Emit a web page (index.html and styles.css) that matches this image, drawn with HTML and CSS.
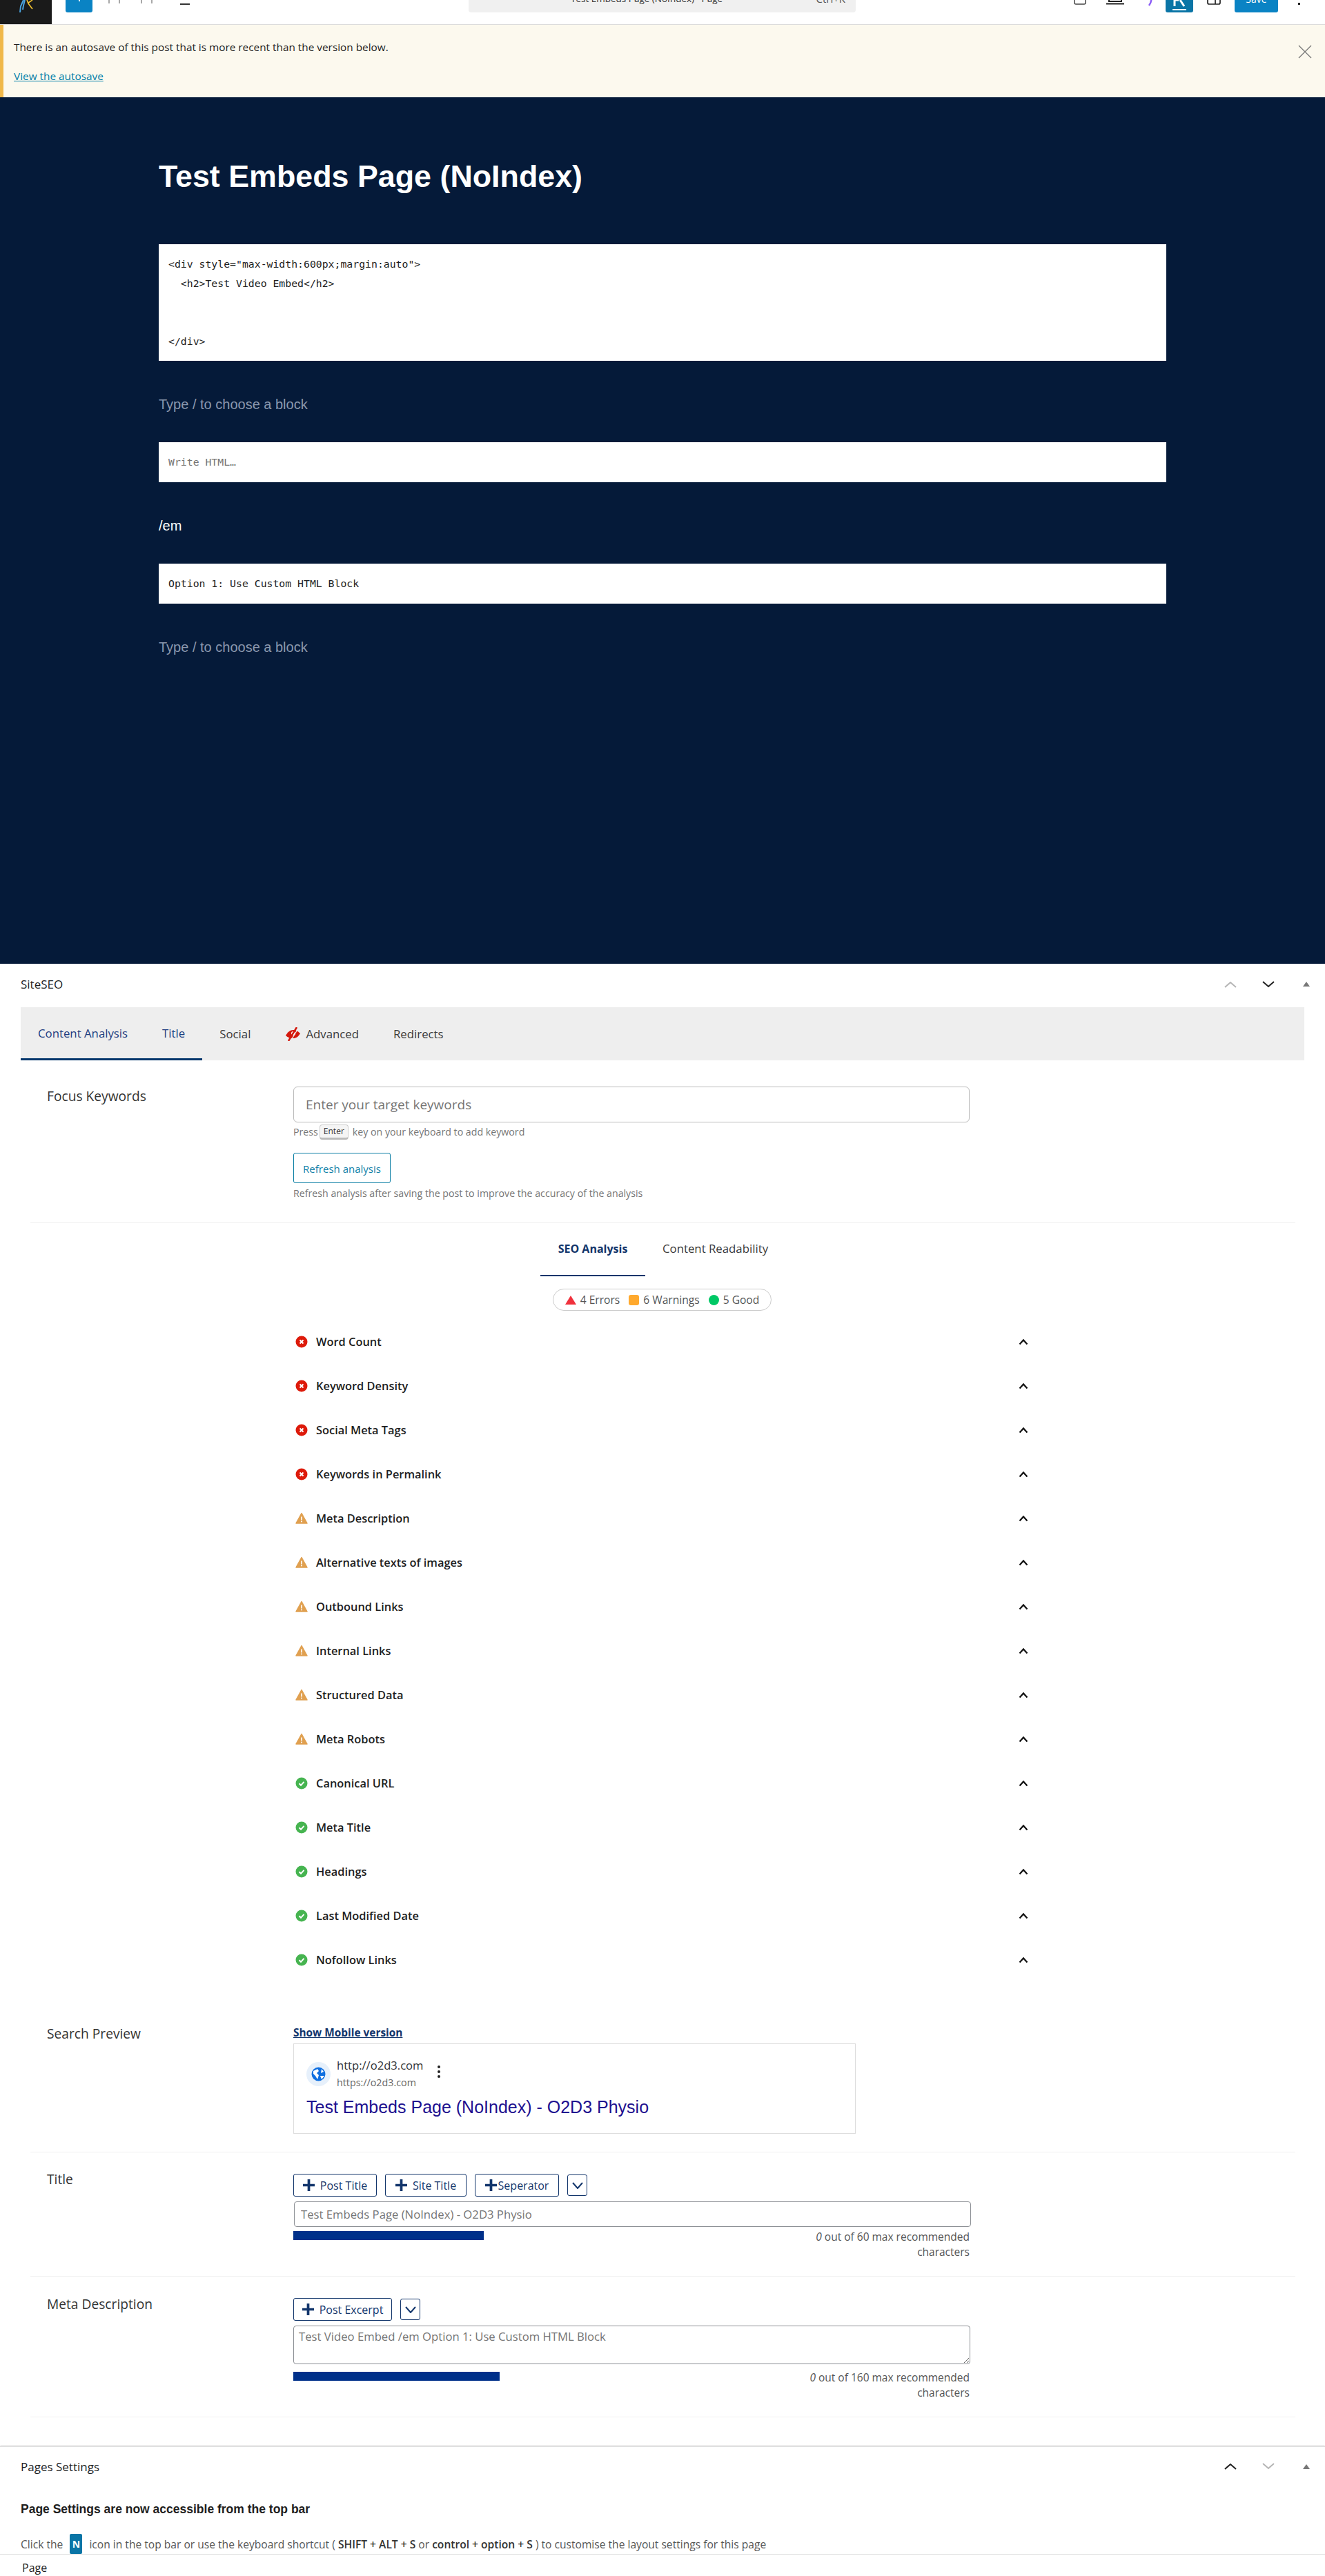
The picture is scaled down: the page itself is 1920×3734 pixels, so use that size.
FILE: index.html
```html
<!DOCTYPE html>
<html lang="en">
<head>
<meta charset="utf-8">
<title>Edit Page</title>
<link rel="stylesheet" href="styles.css">
</head>
<body>
<header class="topbar">
  <div class="logo"><svg width="24" height="18" viewBox="0 0 24 18"><path d="M8 0 4 9l-1 9M10 0 8 8l-1 6" stroke="#4aa3df" stroke-width="2" fill="none"/><path d="M13 0l2 5 6 8M21 0l-6 4" stroke="#f2c230" stroke-width="1.600" fill="none"/></svg></div>
  <div class="add-btn"><span class="add-plus"></span></div>
  <span class="tick tick-a"></span><span class="tick tick-b"></span><span class="tick tick-c"></span><span class="tick tick-d"></span>
  <span class="dash"></span>
  <div class="search"><span class="search-title">Test Embeds Page (NoIndex) · Page</span><span class="search-key">Ctrl+K</span></div>
  <svg class="top-icon ti-doc" width="18" height="20" viewBox="0 0 18 20"><path d="M1 0v17a2 2 0 0 0 2 2h12a2 2 0 0 0 2-2V0" fill="none" stroke="#444" stroke-width="1.500"/></svg>
  <svg class="top-icon ti-lap" width="26" height="20" viewBox="0 0 26 20"><path d="M4 0v15h18V0" fill="none" stroke="#222" stroke-width="2"/><path d="M0 18.500h26" stroke="#222" stroke-width="2"/></svg>
  <svg class="top-icon ti-swirl" width="14" height="28" viewBox="0 0 14 28"><path d="M10 0c4 8 2 12-2 16" fill="none" stroke="#3c8fe0" stroke-width="3"/><path d="M8 14c1 5 0 8-3 12" fill="none" stroke="#8b5cf6" stroke-width="2.500"/></svg>
  <div class="n-btn"><svg width="22" height="18" viewBox="0 0 22 18"><path d="M4 0v9M18 9 12 0M4 0h6" stroke="#fff" stroke-width="3" fill="none"/><path d="M1 14h20" stroke="#fff" stroke-width="2"/></svg></div>
  <svg class="top-icon ti-side" width="20" height="20" viewBox="0 0 20 20"><path d="M1 0v17a2 2 0 0 0 2 2h14a2 2 0 0 0 2-2V0M12 0v19" fill="none" stroke="#222" stroke-width="1.700"/></svg>
  <div class="save-btn">Save</div>
  <span class="top-dot"></span>
</header>

<section class="notice">
  <div class="notice-body">
    <p class="notice-text">There is an autosave of this post that is more recent than the version below.</p>
    <a class="notice-link" href="#">View the autosave</a>
  </div>
  <svg class="notice-close" width="20" height="20" viewBox="0 0 20 20"><path d="M1 1l18 18M19 1 1 19" stroke="#777" stroke-width="1.300"/></svg>
</section>

<main class="canvas">
  <h1 class="post-title">Test Embeds Page (NoIndex)</h1>
  <pre class="code code-tall">&lt;div style="max-width:600px;margin:auto"&gt;
  &lt;h2&gt;Test Video Embed&lt;/h2&gt;


&lt;/div&gt;</pre>
  <p class="para para-ph">Type / to choose a block</p>
  <pre class="code code-ph">Write HTML…</pre>
  <p class="para">/em</p>
  <pre class="code">Option 1: Use Custom HTML Block</pre>
  <p class="para para-ph">Type / to choose a block</p>
</main>

<section class="seo">
  <div class="box-head">
    <h2 class="box-title">SiteSEO</h2>
    <span class="box-act"><svg width="18" height="10" viewBox="0 0 18 10"><path d="M1 9l8-7 8 7" fill="none" stroke="#b5b5b5" stroke-width="2"/></svg></span>
    <span class="box-act"><svg width="18" height="10" viewBox="0 0 18 10"><path d="M1 1l8 7 8-7" fill="none" stroke="#1e1e1e" stroke-width="2"/></svg></span>
    <span class="box-act"><span class="caret"></span></span>
  </div>

  <nav class="tabbar">
    <div class="tab-group">
      <span class="tab tab-on">Content Analysis</span>
      <span class="tab tab-on">Title</span>
    </div>
    <span class="tab">Social</span>
    <span class="tab tab-adv"><svg width="23" height="20" viewBox="0 0 23 20"><path d="M1 12c3-5 6-8 11-8 3 0 6 1 10 5-3 5-6 7-10 7-4 0-8-1-11-4z" fill="#d3180c"/><circle cx="12" cy="9" r="3" fill="#fff"/><path d="M17 0 5 20" stroke="#d3180c" stroke-width="2.500"/><path d="M19 2 8 20" stroke="#eee" stroke-width="1.200"/></svg>Advanced</span>
    <span class="tab">Redirects</span>
  </nav>

  <div class="form-row row-focus">
    <div class="row-label">Focus Keywords</div>
    <div class="row-field">
      <input class="kw-input" type="text" placeholder="Enter your target keywords">
      <p class="hint hint-press"><span>Press</span><kbd class="key">Enter</kbd><span>key on your keyboard to add keyword</span></p>
      <button class="refresh" type="button">Refresh analysis</button>
      <p class="hint hint-refresh">Refresh analysis after saving the post to improve the accuracy of the analysis</p>
    </div>
  </div>

  <hr class="rule">

  <div class="subtabs">
    <span class="subtab subtab-on">SEO Analysis</span>
    <span class="subtab">Content Readability</span>
  </div>

  <div class="pill-wrap">
    <div class="pill">
      <span class="pill-item"><span class="shape-tri"></span>4 Errors</span>
      <span class="pill-item"><span class="shape-sq"></span>6 Warnings</span>
      <span class="pill-item"><span class="shape-dot"></span>5 Good</span>
    </div>
  </div>

  <ul class="checks">
    <li class="check"><svg class="st" viewBox="0 0 18 18"><use href="#st-err"/></svg><span class="check-name">Word Count</span><svg class="chev" viewBox="0 0 14 10"><use href="#chev-up"/></svg></li>
    <li class="check"><svg class="st" viewBox="0 0 18 18"><use href="#st-err"/></svg><span class="check-name">Keyword Density</span><svg class="chev" viewBox="0 0 14 10"><use href="#chev-up"/></svg></li>
    <li class="check"><svg class="st" viewBox="0 0 18 18"><use href="#st-err"/></svg><span class="check-name">Social Meta Tags</span><svg class="chev" viewBox="0 0 14 10"><use href="#chev-up"/></svg></li>
    <li class="check"><svg class="st" viewBox="0 0 18 18"><use href="#st-err"/></svg><span class="check-name">Keywords in Permalink</span><svg class="chev" viewBox="0 0 14 10"><use href="#chev-up"/></svg></li>
    <li class="check"><svg class="st" viewBox="0 0 18 18"><use href="#st-warn"/></svg><span class="check-name">Meta Description</span><svg class="chev" viewBox="0 0 14 10"><use href="#chev-up"/></svg></li>
    <li class="check"><svg class="st" viewBox="0 0 18 18"><use href="#st-warn"/></svg><span class="check-name">Alternative texts of images</span><svg class="chev" viewBox="0 0 14 10"><use href="#chev-up"/></svg></li>
    <li class="check"><svg class="st" viewBox="0 0 18 18"><use href="#st-warn"/></svg><span class="check-name">Outbound Links</span><svg class="chev" viewBox="0 0 14 10"><use href="#chev-up"/></svg></li>
    <li class="check"><svg class="st" viewBox="0 0 18 18"><use href="#st-warn"/></svg><span class="check-name">Internal Links</span><svg class="chev" viewBox="0 0 14 10"><use href="#chev-up"/></svg></li>
    <li class="check"><svg class="st" viewBox="0 0 18 18"><use href="#st-warn"/></svg><span class="check-name">Structured Data</span><svg class="chev" viewBox="0 0 14 10"><use href="#chev-up"/></svg></li>
    <li class="check"><svg class="st" viewBox="0 0 18 18"><use href="#st-warn"/></svg><span class="check-name">Meta Robots</span><svg class="chev" viewBox="0 0 14 10"><use href="#chev-up"/></svg></li>
    <li class="check"><svg class="st" viewBox="0 0 18 18"><use href="#st-ok"/></svg><span class="check-name">Canonical URL</span><svg class="chev" viewBox="0 0 14 10"><use href="#chev-up"/></svg></li>
    <li class="check"><svg class="st" viewBox="0 0 18 18"><use href="#st-ok"/></svg><span class="check-name">Meta Title</span><svg class="chev" viewBox="0 0 14 10"><use href="#chev-up"/></svg></li>
    <li class="check"><svg class="st" viewBox="0 0 18 18"><use href="#st-ok"/></svg><span class="check-name">Headings</span><svg class="chev" viewBox="0 0 14 10"><use href="#chev-up"/></svg></li>
    <li class="check"><svg class="st" viewBox="0 0 18 18"><use href="#st-ok"/></svg><span class="check-name">Last Modified Date</span><svg class="chev" viewBox="0 0 14 10"><use href="#chev-up"/></svg></li>
    <li class="check"><svg class="st" viewBox="0 0 18 18"><use href="#st-ok"/></svg><span class="check-name">Nofollow Links</span><svg class="chev" viewBox="0 0 14 10"><use href="#chev-up"/></svg></li>
  </ul>

  <div class="form-row row-preview">
    <div class="row-label">Search Preview</div>
    <div class="row-field">
      <a class="mobile-link" href="#">Show Mobile version</a>
      <div class="serp">
        <div class="serp-head">
          <svg class="globe" width="35" height="35" viewBox="0 0 35 35"><circle cx="17.500" cy="17.500" r="17.500" fill="#e6f0fb"/><circle cx="17.500" cy="17.500" r="10" fill="#0f6fe0"/><path d="M10 13l6-3 2 3-3 3 3 3-2 6-3-5-3-3zM22 10l3 4-4 2zM20 20h6l-4 5z" fill="#fff"/></svg>
          <div class="serp-urls"><div class="serp-site">http://o2d3.com</div><div class="serp-url">https://o2d3.com</div></div>
          <span class="serp-dots"><i></i><i></i><i></i></span>
        </div>
        <a class="serp-title" href="#">Test Embeds Page (NoIndex) - O2D3 Physio</a>
      </div>
    </div>
  </div>

  <hr class="rule rule-preview">

  <div class="form-row row-title">
    <div class="row-label">Title</div>
    <div class="row-field field-title">
      <div class="tag-row">
        <button class="tag tag-w1" type="button"><svg class="plus" viewBox="0 0 16 16"><use href="#plus"/></svg>Post Title</button>
        <button class="tag tag-w2" type="button"><svg class="plus" viewBox="0 0 16 16"><use href="#plus"/></svg>Site Title</button>
        <button class="tag tag-w3" type="button"><svg class="plus" viewBox="0 0 16 16"><use href="#plus"/></svg>Seperator</button>
        <button class="tag-more" type="button"><svg width="16" height="10" viewBox="0 0 16 10"><path d="M1 1l7 8 7-8" fill="none" stroke="#12356b" stroke-width="2"/></svg></button>
      </div>
      <input class="title-input" type="text" placeholder="Test Embeds Page (NoIndex) - O2D3 Physio">
      <div class="meter-row">
        <div class="meter meter-title"></div>
        <p class="count"><em>0</em> out of 60 max recommended characters</p>
      </div>
    </div>
  </div>

  <hr class="rule rule-title">

  <div class="form-row row-meta">
    <div class="row-label">Meta Description</div>
    <div class="row-field field-meta">
      <div class="tag-row">
        <button class="tag tag-w4" type="button"><svg class="plus" viewBox="0 0 16 16"><use href="#plus"/></svg>Post Excerpt</button>
        <button class="tag-more" type="button"><svg width="16" height="10" viewBox="0 0 16 10"><path d="M1 1l7 8 7-8" fill="none" stroke="#12356b" stroke-width="2"/></svg></button>
      </div>
      <textarea class="meta-input" placeholder="Test Video Embed /em Option 1: Use Custom HTML Block"></textarea>
      <div class="meter-row meter-row-meta">
        <div class="meter meter-meta"></div>
        <p class="count"><em>0</em> out of 160 max recommended characters</p>
      </div>
    </div>
  </div>

  <hr class="rule rule-title">
</section>

<section class="pages">
  <div class="box-head box-head-pages">
    <h2 class="box-title">Pages Settings</h2>
    <span class="box-act"><svg width="18" height="10" viewBox="0 0 18 10"><path d="M1 9l8-7 8 7" fill="none" stroke="#1e1e1e" stroke-width="2"/></svg></span>
    <span class="box-act"><svg width="18" height="10" viewBox="0 0 18 10"><path d="M1 1l8 7 8-7" fill="none" stroke="#b5b5b5" stroke-width="2"/></svg></span>
    <span class="box-act"><span class="caret"></span></span>
  </div>
  <h3 class="pages-head">Page Settings are now accessible from the top bar</h3>
  <p class="pages-text">Click the <span class="n-mini">N</span> icon in the top bar or use the keyboard shortcut ( <b>SHIFT + ALT + S</b> or <b>control + option + S</b> ) to customise the layout settings for this page</p>
</section>

<footer class="crumb">Page</footer>

<svg class="defs" width="0" height="0">
  <defs>
    <symbol id="st-err" viewBox="0 0 18 18"><circle cx="9" cy="9" r="8.500" fill="#dd1a0a"/><path d="M6.500 6.500l5 5M11.500 6.500l-5 5" stroke="#fff" stroke-width="2"/></symbol>
    <symbol id="st-warn" viewBox="0 0 18 18"><path d="M9 1.500 17 16H1z" fill="#e0a050" stroke="#e0a050" stroke-width="1.500" stroke-linejoin="round"/><path d="M9 6.500v5" stroke="#fff" stroke-width="1.600"/><circle cx="9" cy="13.500" r="1" fill="#fff"/></symbol>
    <symbol id="st-ok" viewBox="0 0 18 18"><circle cx="9" cy="9" r="8.500" fill="#46b450"/><path d="M5.500 9.300l2.500 2.500 4.500-5" fill="none" stroke="#fff" stroke-width="2"/></symbol>
    <symbol id="chev-up" viewBox="0 0 14 10"><path d="M1.500 8.500 7 2.500l5.500 6" fill="none" stroke="#111" stroke-width="2.200"/></symbol>
    <symbol id="plus" viewBox="0 0 16 16"><path d="M8 0v16M0 8h16" stroke="#12356b" stroke-width="3.500"/></symbol>
  </defs>
</svg>
</body>
</html>
```

FILE: styles.css
```css
* { box-sizing: border-box; }
html, body { margin: 0; padding: 0; }
body { width: 1920px; height: 3734px; overflow: hidden; background: #fff; color: #2c3338; font-family: "Open Sans", "Noto Sans", sans-serif; font-size: 15px; }
p, h1, h2, h3, ul { margin: 0; padding: 0; }
a { color: inherit; }

/* top bar */
.topbar { display: flex; align-items: flex-end; height: 36px; padding-bottom: 17px; border-bottom: 1px solid #dcdcdc; overflow: hidden; background: #fff; }
.logo { flex: none; display: flex; justify-content: center; align-items: flex-end; width: 75px; height: 35px; margin-bottom: -17px; padding-bottom: 17px; background: #1a1a1a; }
.add-btn { flex: none; display: flex; justify-content: center; align-items: flex-start; width: 39px; height: 40px; margin-left: 20px; background: #0a83c4; border-radius: 3px; }
.add-plus { width: 2px; height: 24px; background: #fff; }
.tick { flex: none; width: 2px; height: 8px; margin-bottom: 13px; background: #a8a8a8; }
.tick-a { margin-left: 23px; }
.tick-b { margin-left: 13px; }
.tick-c { margin-left: 30px; }
.tick-d { margin-left: 13px; }
.dash { flex: none; width: 14px; height: 2px; margin-left: 40px; margin-bottom: 11px; background: #333; }
.search { flex: none; display: flex; justify-content: space-between; align-items: center; width: 561px; height: 40px; margin-left: 404px; padding: 0 15px 0 148px; background: #f0f0f0; border-radius: 4px; font-size: 13.500px; color: #333; }
.search-key { font-size: 15px; color: #555; }
.top-icon { flex: none; }
.ti-doc { margin-left: 316px; margin-bottom: 11px; }
.ti-lap { margin-left: 29px; margin-bottom: 11px; }
.ti-swirl { margin-left: 31px; margin-bottom: 8px; }
.n-btn { flex: none; display: flex; justify-content: center; align-items: flex-end; width: 40px; height: 40px; margin-left: 15px; background: #0a75a6; border-radius: 3px; }
.ti-side { margin-left: 20px; margin-bottom: 11px; }
.save-btn { flex: none; display: flex; justify-content: center; align-items: center; width: 63px; height: 40px; margin-left: 20px; background: #0a83c4; border-radius: 3px; color: #fff; font-size: 14px; }
.top-dot { flex: none; width: 3px; height: 3px; margin-left: 29px; margin-bottom: 11px; background: #222; }

/* notice */
.notice { display: flex; justify-content: space-between; height: 105px; padding: 21px 19px 0 15px; border-left: 5px solid #f0b849; background: #fcf9ee; }
.notice-text { font-size: 15.350px; line-height: 22px; color: #1e1e1e; }
.notice-link { display: block; margin-top: 20px; line-height: 22px; font-size: 15.350px; color: #007ea8; }
.notice-close { margin-top: 8px; }

/* editor canvas */
.canvas { height: 1256px; padding: 84px 230px 0; background: #051a39; }
.post-title { height: 60px; margin-bottom: 69px; font-family: "Liberation Sans", Arial, sans-serif; font-size: 44.800px; line-height: 60px; font-weight: 700; color: #fff; }
.code { height: 58px; margin: 0; padding: 15px 14px; background: #fff; font-family: "DejaVu Sans Mono", monospace; font-size: 14.800px; line-height: 28px; color: #1e1e1e; }
.code-tall { height: 169px; }
.code-ph { color: #757575; }
.para { height: 30px; margin: 48px 0 40px; font-family: "Liberation Sans", Arial, sans-serif; font-size: 20px; line-height: 30px; color: #fff; }
.para-ph { color: #8b98ae; }

/* meta boxes */
.box-head { display: flex; align-items: center; height: 63px; padding: 0 0 4px 30px; }
.box-title { flex: 1; font-size: 17px; font-weight: 400; color: #1e1e1e; }
.box-act { flex: none; display: flex; justify-content: center; align-items: center; width: 55px; }
.caret { width: 0; height: 0; border-left: 5px solid transparent; border-right: 5px solid transparent; border-bottom: 7px solid #777; }

.tabbar { display: flex; height: 77px; margin: 0 30px; background: #eee; }
.tab-group { display: flex; border-bottom: 3px solid #00356b; }
.tab { display: flex; align-items: center; gap: 7px; height: 77px; padding: 0 25px; font-size: 16.800px; color: #3a3a3a; }
.tab-group .tab { height: 74px; }
.tab-on { color: #1d3d80; }

.form-row { display: grid; grid-template-columns: 357px 982px; padding-left: 68px; }
.row-label { font-size: 19.200px; line-height: 22px; color: #333; }
.row-focus { padding-top: 38px; }
.row-focus .row-label { padding-top: 3px; }
.kw-input { display: block; width: 980px; height: 52px; padding: 0 17px; border: 1px solid #bbb; border-radius: 6px; font: inherit; font-size: 19px; outline: none; }
.kw-input::placeholder, .title-input::placeholder, .meta-input::placeholder { color: #757575; opacity: 1; }
.hint { height: 20px; line-height: 20px; font-size: 14.200px; color: #757575; }
.hint-press { margin-top: 4px; display: flex; align-items: center; gap: 2px; }
.key { display: inline-flex; justify-content: center; align-items: center; width: 42px; height: 22px; margin-right: 4px; border: 1px solid #ccc; border-bottom: 3px solid #bbb; border-radius: 4px; background: #f5f5f5; font-family: inherit; font-size: 12px; color: #333; }
.refresh { display: block; width: 141px; height: 44px; margin-top: 20px; padding: 1px 0 0; background: #fff; border: 1px solid #0a7ea4; border-radius: 3px; font: inherit; font-size: 15px; color: #0f7fa8; }
.hint-refresh { margin-top: 5px; }

.rule { display: block; height: 1px; margin: 32px 43px 0 44px; border: 0; background: #f0f0f0; }

.subtabs { display: flex; height: 77px; margin-left: 783px; }
.subtab { display: flex; justify-content: center; align-items: center; height: 73px; padding: 0 25px; font-size: 16.800px; color: #3a3a3a; }
.subtab-on { width: 152px; height: 77px; padding: 0 0 2px; border-bottom: 2px solid #00356b; font-size: 16px; font-weight: 700; color: #12356b; }

.pill-wrap { display: flex; justify-content: center; margin-top: 18px; padding-right: 1px; }
.pill { display: flex; align-items: center; gap: 13px; height: 32px; padding: 0 17px; border: 1px solid #ccc; border-radius: 16px; font-size: 15.600px; color: #555; }
.pill-item { display: flex; align-items: center; gap: 6px; }
.shape-tri { width: 0; height: 0; border-left: 8px solid transparent; border-right: 8px solid transparent; border-bottom: 13px solid #f0313c; }
.shape-sq { width: 15px; height: 15px; background: #ffa92e; border-radius: 3px; }
.shape-dot { width: 15px; height: 15px; background: #00c865; border-radius: 50%; }

.checks { list-style: none; margin: 13px 0 0 428px; width: 1062px; }
.check { display: flex; align-items: center; height: 64px; font-size: 16.400px; font-weight: 600; color: #1e1e1e; }
.st { width: 18px; height: 18px; margin-right: 12px; }
.check-name { flex: 1; padding-bottom: 2px; }
.chev { width: 14px; height: 10px; }

.row-preview { padding-top: 64px; }
.mobile-link { display: block; height: 20px; line-height: 20px; font-size: 15.400px; font-weight: 700; color: #12356b; }
.serp { width: 815px; height: 131px; margin-top: 5px; padding: 18px 18px 0; border: 1px solid #ddd; }
.serp-head { display: flex; align-items: center; gap: 9px; }
.serp-urls { width: 137px; }
.serp-site { height: 25px; line-height: 25px; font-size: 16.600px; color: #333; }
.serp-url { height: 25px; line-height: 25px; font-size: 14.300px; color: #666; }
.serp-dots { display: flex; flex-direction: column; gap: 3px; margin-top: -6px; }
.serp-dots i { display: block; width: 4px; height: 4px; border-radius: 50%; background: #222; }
.serp-title { display: block; margin-top: 8px; font-family: "Liberation Sans", Arial, sans-serif; font-size: 25px; line-height: 30px; color: #20108f; text-decoration: none; }

.rule-preview { margin-top: 26px; }
.row-title { padding-top: 28px; }
.field-title { padding-top: 3px; }
.tag-row { display: flex; align-items: center; gap: 12px; }
.tag { display: flex; justify-content: center; align-items: center; gap: 8px; height: 33px; padding: 0; background: #fff; border: 1px solid #12356b; border-radius: 3px; font: inherit; font-size: 16px; color: #12356b; }
.tag-w1 { width: 121px; }
.tag-w2 { width: 118px; }
.tag-w3 { width: 122px; gap: 2px; }
.tag-w4 { width: 143px; }
.plus { width: 17px; height: 17px; }
.tag-more { display: flex; justify-content: center; align-items: center; width: 29px; height: 31px; padding: 0; background: #fff; border: 1px solid #12356b; border-radius: 3px; }
.title-input { display: block; width: 981px; height: 37px; margin: 7px 0 3px 1px; padding: 0 9px; border: 1px solid #8c8f94; border-radius: 4px; font: inherit; font-size: 16.700px; outline: none; }
.meter-row { display: flex; justify-content: space-between; align-items: flex-start; padding-right: 2px; }
.meter { height: 13px; margin-top: 3px; background: #00308a; }
.meter-title { width: 276px; }
.meter-meta { width: 299px; }
.count { width: 250px; text-align: right; font-size: 15.500px; line-height: 22px; color: #555; }
.rule-title { margin-top: 24px; }
.row-meta { padding-top: 29px; }
.field-meta { padding-top: 2px; }
.meta-input { display: block; width: 981px; height: 56px; margin-top: 7px; padding: 4px 7px; border: 1px solid #8c8f94; border-radius: 4px; font: inherit; font-size: 16.700px; line-height: 22px; outline: none; }
.meter-row-meta { margin-top: 8px; }

/* page settings */
.pages { height: 157px; margin-top: 41px; border-top: 2px solid #e0e0e0; box-shadow: 0 -2px 0 -1px #f3f3f3; }
.box-head-pages { height: 58px; padding-bottom: 2px; }
.pages-head { height: 24px; margin-top: 20px; margin-left: 30px; font-family: "Liberation Sans", Arial, sans-serif; font-size: 17.500px; line-height: 24px; font-weight: 700; color: #1e1e1e; }
.pages-text { display: flex; align-items: center; height: 29px; margin-top: 24px; margin-left: 30px; white-space: pre; font-size: 15.600px; color: #555; }
.pages-text b { font-weight: 600; color: #333; }
.n-mini { display: flex; justify-content: center; align-items: center; width: 18px; height: 29px; margin: 0 6px; background: #0a75a6; border-radius: 2px; font-weight: 700; color: #fff; font-size: 14px; }
.crumb { height: 31px; padding: 8px 0 0 32px; border-top: 1px solid #e0e0e0; font-size: 16px; line-height: 22px; color: #1e1e1e; }
.defs { display: block; height: 0; }
```
